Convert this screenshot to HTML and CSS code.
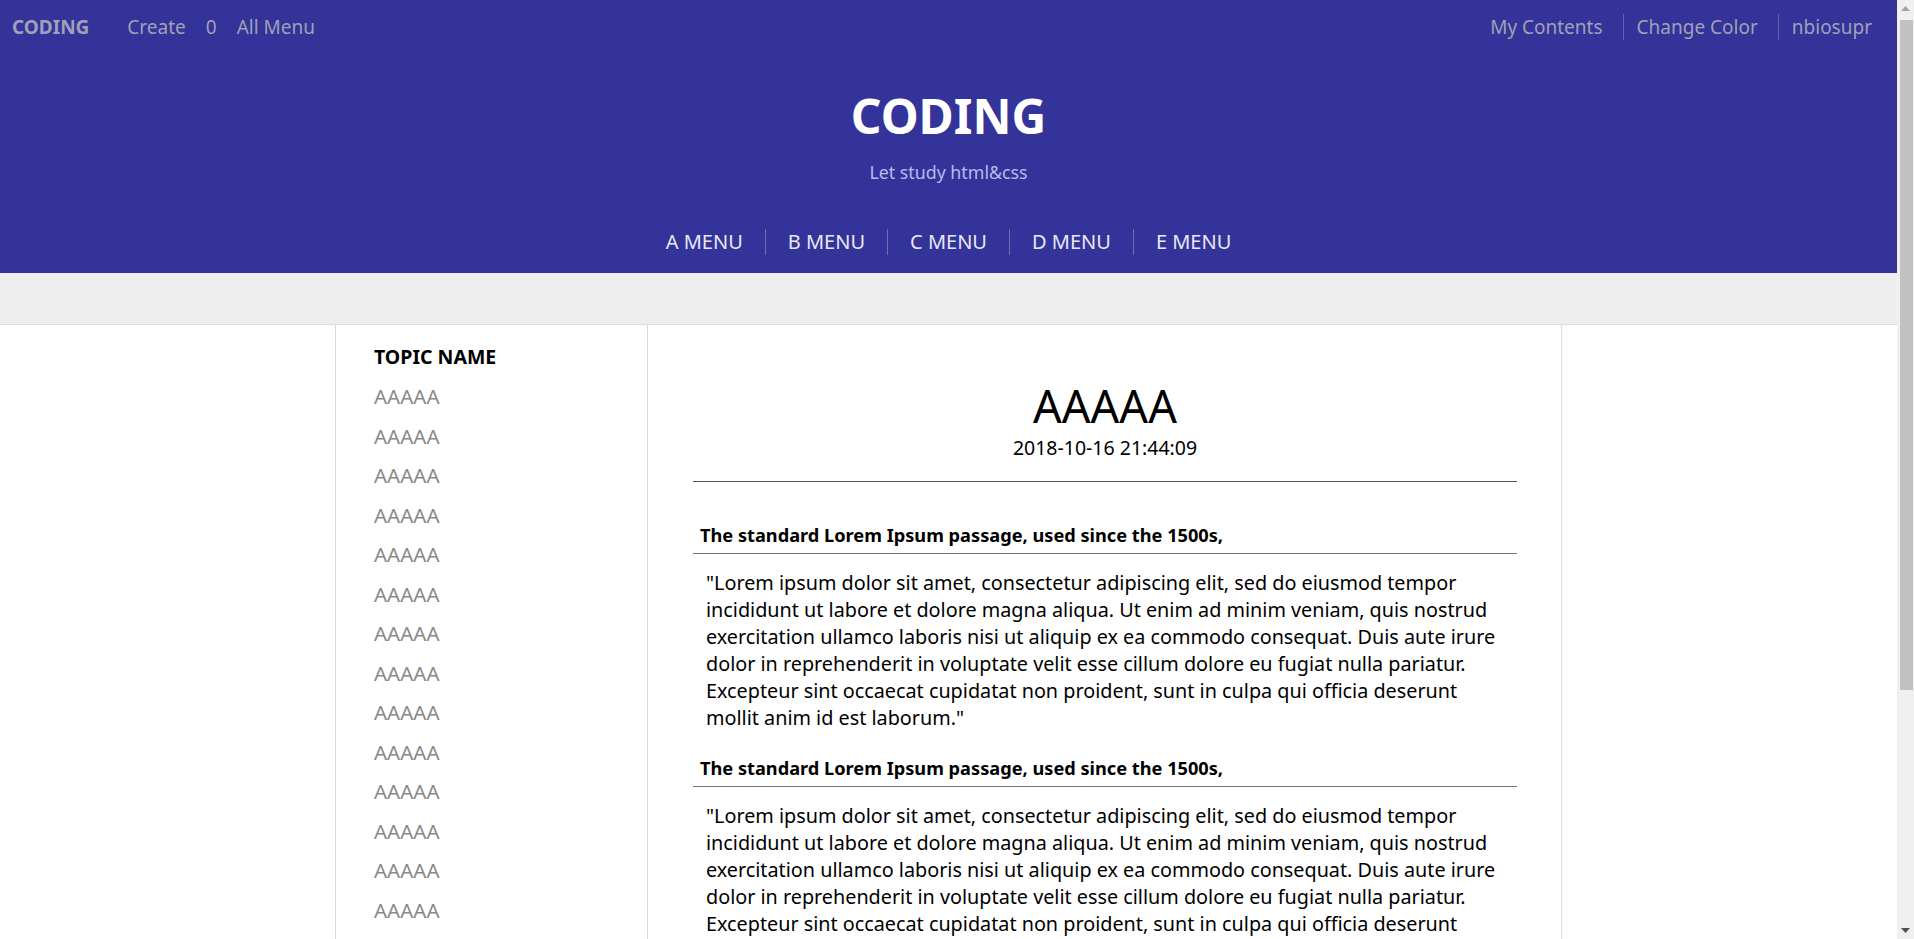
FILE: index.html
```html
<!DOCTYPE html>
<html lang="en">
<head>
<meta charset="utf-8">
<title>CODING</title>
<link rel="stylesheet" href="styles.css">
</head>
<body>
<div class="page">
  <header class="header">
    <div class="topbar">
      <ul class="top-left">
        <li class="top-brand">CODING</li>
        <li>Create</li>
        <li>0</li>
        <li>All Menu</li>
      </ul>
      <ul class="top-right">
        <li>My Contents</li>
        <li>Change Color</li>
        <li>nbiosupr</li>
      </ul>
    </div>
    <h1 class="site-title">CODING</h1>
    <p class="site-sub">Let study html&amp;css</p>
    <ul class="main-nav">
      <li>A MENU</li>
      <li>B MENU</li>
      <li>C MENU</li>
      <li>D MENU</li>
      <li>E MENU</li>
    </ul>
  </header>
  <div class="band"></div>
  <div class="container">
    <aside class="sidebar">
      <h3 class="topic">TOPIC NAME</h3>
      <ul class="topic-list">
        <li>AAAAA</li><li>AAAAA</li><li>AAAAA</li><li>AAAAA</li><li>AAAAA</li>
        <li>AAAAA</li><li>AAAAA</li><li>AAAAA</li><li>AAAAA</li><li>AAAAA</li>
        <li>AAAAA</li><li>AAAAA</li><li>AAAAA</li><li>AAAAA</li><li>AAAAA</li>
        <li>AAAAA</li><li>AAAAA</li>
      </ul>
    </aside>
    <main class="content">
      <div class="post-head">
        <h2 class="post-title">AAAAA</h2>
        <div class="post-date">2018-10-16 21:44:09</div>
      </div>
      <section class="section">
        <h4 class="section-title">The standard Lorem Ipsum passage, used since the 1500s,</h4>
        <p class="section-text">"Lorem ipsum dolor sit amet, consectetur adipiscing elit, sed do eiusmod tempor incididunt ut labore et dolore magna aliqua. Ut enim ad minim veniam, quis nostrud exercitation ullamco laboris nisi ut aliquip ex ea commodo consequat. Duis aute irure dolor in reprehenderit in voluptate velit esse cillum dolore eu fugiat nulla pariatur. Excepteur sint occaecat cupidatat non proident, sunt in culpa qui officia deserunt mollit anim id est laborum."</p>
      </section>
      <section class="section">
        <h4 class="section-title">The standard Lorem Ipsum passage, used since the 1500s,</h4>
        <p class="section-text">"Lorem ipsum dolor sit amet, consectetur adipiscing elit, sed do eiusmod tempor incididunt ut labore et dolore magna aliqua. Ut enim ad minim veniam, quis nostrud exercitation ullamco laboris nisi ut aliquip ex ea commodo consequat. Duis aute irure dolor in reprehenderit in voluptate velit esse cillum dolore eu fugiat nulla pariatur. Excepteur sint occaecat cupidatat non proident, sunt in culpa qui officia deserunt mollit anim id est laborum."</p>
      </section>
    </main>
  </div>
</div>
<div class="scrollbar">
  <div class="sb-arrow sb-up"><svg width="9" height="5" viewBox="0 0 9 5"><polygon points="0,5 9,5 4.5,0" fill="#a3a3a3"/></svg></div>
  <div class="sb-track"><div class="sb-thumb"></div></div>
  <div class="sb-arrow sb-down"><svg width="9" height="5" viewBox="0 0 9 5"><polygon points="0,0 9,0 4.5,5" fill="#505050"/></svg></div>
</div>
</body>
</html>
```

FILE: styles.css
```css
* { box-sizing: border-box; }
html, body { margin: 0; padding: 0; }
body {
  display: flex;
  height: 939px;
  overflow: hidden;
  font-family: "Noto Sans", "Noto Sans CJK KR", sans-serif;
  color: #000;
  background: #fff;
}
ul { list-style: none; margin: 0; padding: 0; }
h1, h2, h3, h4, p { margin: 0; }

.page {
  flex: 1;
  min-width: 0;
  overflow: hidden;
}

/* header */
.header {
  background: #333399;
  padding-bottom: 18px;
}
.topbar {
  display: flex;
  justify-content: space-between;
  align-items: center;
  height: 54px;
  padding: 0 5px 0 12px;
  font-size: 19px;
  color: #a0a0b8;
}
.top-left { display: flex; align-items: center; }
.top-left li { margin-left: 20px; line-height: 26px; }
.top-left .top-brand { margin-left: 0; margin-right: 18px; font-weight: 700; }
.top-right { display: flex; align-items: center; }
.top-right li { line-height: 26px; padding: 0 20px 0 13px; }
.top-right li + li { border-left: 1px solid #6262a8; }
.top-right li:first-child { padding-left: 0; }

.site-title {
  margin-top: 34px;
  text-align: center;
  color: #fff;
  font-size: 48px;
  line-height: 56px;
  font-weight: 700;
}
.site-sub {
  margin-top: 16px;
  text-align: center;
  color: #b6bcee;
  font-size: 17.8px;
  line-height: 24px;
}
.main-nav {
  margin-top: 45px;
  display: flex;
  justify-content: center;
  color: #e8e8f4;
  font-size: 20px;
}
.main-nav li { line-height: 26px; padding: 0 22px; }
.main-nav li + li { border-left: 1px solid #6e6eaa; }

.band {
  height: 52px;
  background: #eeeeee;
  border-bottom: 1px solid #dddddd;
}

/* main */
.container {
  width: 1227px;
  margin: 0 auto;
  display: flex;
  border-left: 1px solid #dddddd;
  border-right: 1px solid #dddddd;
  min-height: 700px;
}
.sidebar {
  width: 312px;
  flex: none;
  border-right: 1px solid #dddddd;
  padding: 17px 0 0 38px;
}
.topic {
  font-size: 19.5px;
  line-height: 30px;
  font-weight: 700;
}
.topic-list { margin-top: 5px; }
.topic-list li {
  font-size: 20.5px;
  line-height: 39.5px;
  color: #888888;
}

.content {
  flex: 1;
  padding: 54px 44px 0 45px;
}
.post-head {
  text-align: center;
  border-bottom: 1px solid #555555;
  padding-bottom: 20px;
}
.post-title {
  font-size: 45px;
  line-height: 54px;
  font-weight: 400;
}
.post-date {
  margin-top: 2px;
  font-size: 19.5px;
  line-height: 26px;
}
.section { margin-top: 40px; }
.section + .section { margin-top: 24px; }
.section-title {
  font-size: 18.2px;
  line-height: 26px;
  font-weight: 700;
  padding: 0 0 5px 7px;
  border-bottom: 1px solid #777777;
}
.section-text {
  margin-top: 15px;
  padding: 0 11px 0 13px;
  font-size: 19.8px;
  line-height: 27px;
}

/* scrollbar */
.scrollbar {
  width: 17px;
  flex: none;
  height: 939px;
  background: #f0f0f0;
  display: flex;
  flex-direction: column;
}
.sb-arrow {
  height: 17px;
  display: flex;
  align-items: center;
  justify-content: center;
}
.sb-track { flex: 1; padding: 3px 1px 0 3px; }
.sb-thumb { height: 670px; background: #c1c1c1; }
```
